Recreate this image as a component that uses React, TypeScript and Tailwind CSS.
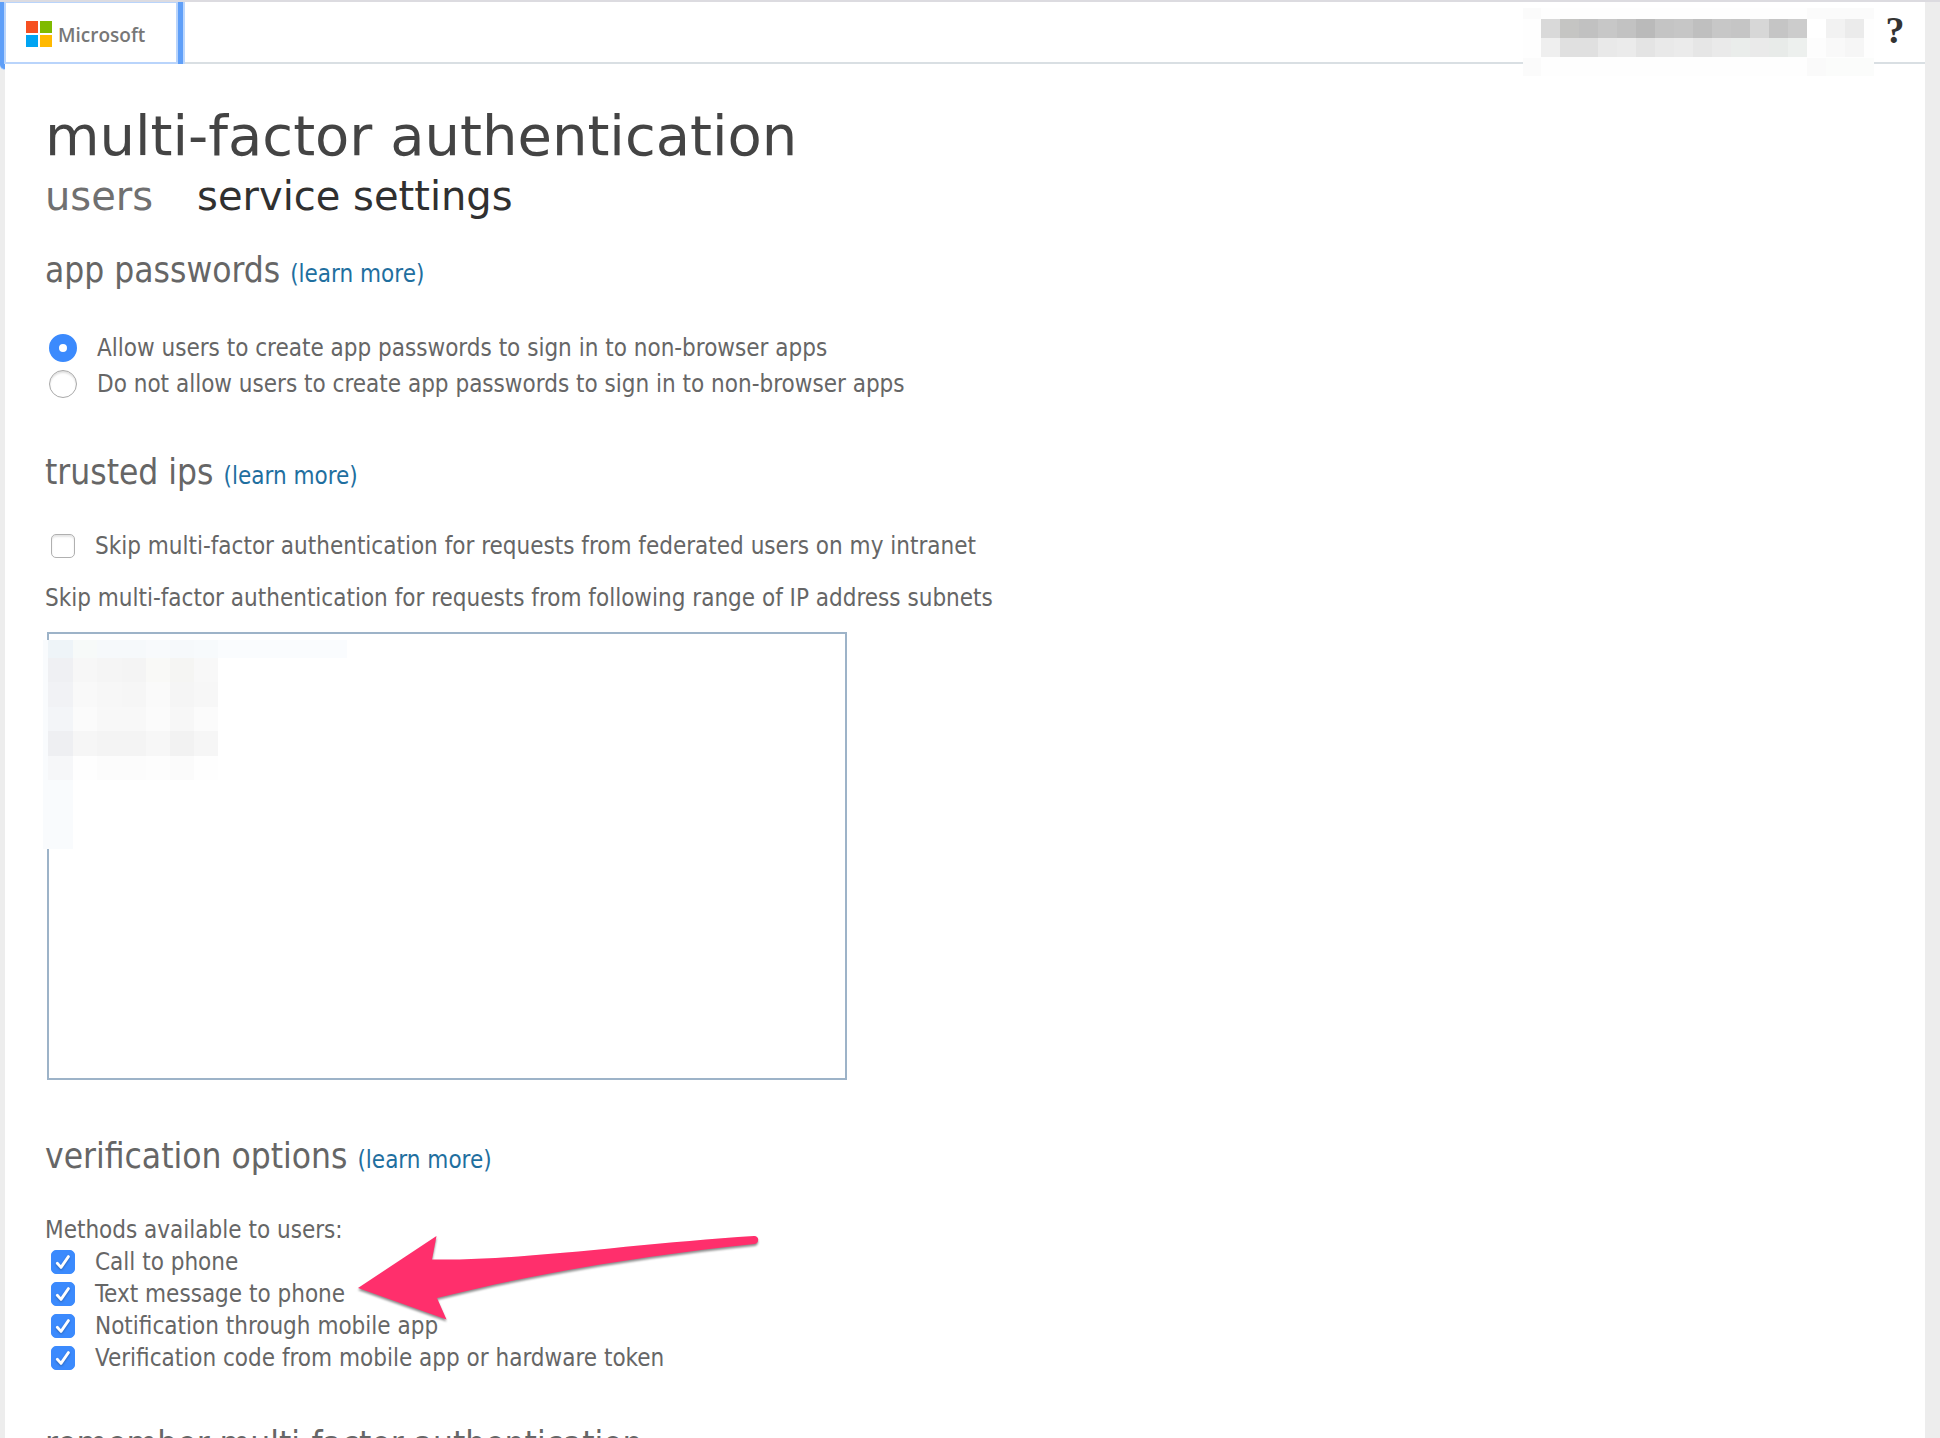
import React, { useId, useState } from 'react';

const BODY_FONT = "font-['DejaVu_Sans_Condensed','DejaVu_Sans',sans-serif]";
const TITLE_FONT = "font-['DejaVu_Sans',sans-serif]";

function MicrosoftMark() {
  return (
    <svg className="size-[26px]" viewBox="0 0 26 26" shapeRendering="crispEdges" aria-hidden="true">
      <rect x="0" y="0" width="12" height="12" fill="#f65022" />
      <rect x="14" y="0" width="12" height="12" fill="#7fba00" />
      <rect x="0" y="14" width="12" height="12" fill="#00a4f2" />
      <rect x="14" y="14" width="12" height="12" fill="#ffb901" />
    </svg>
  );
}

const ACCOUNT_TOP = ['#d9d9d9', '#c5c5c3', '#c1c1c1', '#c7c7c7', '#c2c2c2', '#bababa', '#c4c4c4', '#c6c6c6', '#bfbfbf', '#c7c7c7', '#c5c5c5', '#d7d7d7', '#c5c5c5', '#cccccc', '#ffffff', '#f2f2f2', '#ebebeb'];
const ACCOUNT_BOTTOM = ['#efefef', '#e0e0e0', '#e0e0e0', '#e9e9e9', '#ebebeb', '#e4e4e4', '#e9e9e9', '#ebebeb', '#e6e6e6', '#eaeaea', '#eaedeb', '#eaeaea', '#e8ebe9', '#edf0ee', '#fdfdfd', '#f9f9f9', '#f6f6f6'];

/* Pixelated account name in the header. */
function AccountMosaic() {
  return (
    <svg className="absolute top-[6px] right-[51px] h-[68px] w-[351px]" viewBox="0 0 351 68" shapeRendering="crispEdges" aria-hidden="true">
      <rect width="351" height="68" fill="#fefefe" />
      <rect x="0" y="0" width="18" height="11" fill="#fbfbfb" />
      <rect x="284" y="0" width="67" height="11" fill="#fbfbfb" />
      {ACCOUNT_TOP.map((fill, i) => (
        <rect key={i} x={18 + i * 19} y="11" width="19" height="19" fill={fill} />
      ))}
      {ACCOUNT_BOTTOM.map((fill, i) => (
        <rect key={i} x={18 + i * 19} y="30" width="19" height="19" fill={fill} />
      ))}
      <rect x="0" y="50" width="18" height="18" fill="#fbfbfb" />
      <rect x="284" y="50" width="19" height="18" fill="#fafafa" />
      <rect x="303" y="50" width="48" height="18" fill="#fbfcfb" />
    </svg>
  );
}

const SUBNET_ROWS: { y: number; h: number; cells: string[] }[] = [
  { y: 0, h: 18, cells: ['#eef4f8', '#f7faf9', '#f6f9fb', '#f6f9fb', '#f8fafc', '#f6f9fb', '#f7fafc'] },
  { y: 18, h: 24, cells: ['#eff0f3', '#f7f7f7', '#f5f5f5', '#f4f4f4', '#f9f9f7', '#f5f5f3', '#f8f8f8'] },
  { y: 42, h: 25, cells: ['#f1f2f5', '#f9f9f9', '#f7f7f7', '#f6f6f6', '#fafafa', '#f5f5f5', '#f7f7f7'] },
  { y: 67, h: 24, cells: ['#f3f5f8', '#fbfbfb', '#f8f8f8', '#f8f8f8', '#fbfbfb', '#f7f7f7', '#fbfbfb'] },
  { y: 91, h: 25, cells: ['#eeeff2', '#f6f6f6', '#f4f4f4', '#f4f4f4', '#f7f7f7', '#f2f2f2', '#f6f6f6'] },
  { y: 116, h: 24, cells: ['#f6f7f9', '#fefefe', '#fcfcfc', '#fcfcfc', '#fdfdfd', '#fbfbfb', '#fefefe'] },
];
const SUBNET_X = [5, 30, 54, 79, 103, 127, 151, 175];

/* Pixelated address list over the corner of the text box. */
function SubnetMosaic() {
  return (
    <svg className="pointer-events-none absolute top-2 -left-1 h-[209px] w-[304px]" viewBox="0 0 304 209" shapeRendering="crispEdges" aria-hidden="true">
      <rect width="30" height="209" fill="#f9fbfd" />
      <rect x="175" y="0" width="129" height="18" fill="#fafcfe" />
      {SUBNET_ROWS.map((row) =>
        row.cells.map((fill, i) => (
          <rect key={`${row.y}-${i}`} x={SUBNET_X[i]} y={row.y} width={SUBNET_X[i + 1] - SUBNET_X[i]} height={row.h} fill={fill} />
        )),
      )}
    </svg>
  );
}

function PinkArrow() {
  return (
    <svg className="pointer-events-none absolute -top-4 left-[305px] h-[100px] w-[420px] drop-shadow-[0_2px_1px_rgba(0,0,0,0.45)]" viewBox="350 1230 420 100" aria-hidden="true">
      <path
        d="M358 1288 L436.5 1236 L432 1259.5 C520 1261 640 1243 754 1236 C759.5 1235.8 759.5 1243 754.5 1244 C650 1255 540 1272 437 1298 L446.5 1319.5 Z"
        fill="#ff2f6c"
      />
    </svg>
  );
}

function SectionHeading({ children, learnMore = true }: { children: string; learnMore?: boolean }) {
  return (
    <div className="flex items-baseline gap-2.5">
      <h2 className="text-[35px] leading-[48px] whitespace-nowrap">{children}</h2>
      {learnMore && (
        <a href="#learn-more" className="text-[24px] leading-8 whitespace-nowrap text-[#1f6f9f]">
          (learn more)
        </a>
      )}
    </div>
  );
}

function Radio({ label, checked, onSelect }: { label: string; checked: boolean; onSelect: () => void }) {
  const id = useId();
  return (
    <div className="flex h-9 items-center gap-5 pl-1">
      <input
        id={id}
        type="radio"
        name="app-passwords"
        checked={checked}
        onChange={onSelect}
        className="size-7 shrink-0 appearance-none rounded-full border border-[#a9a9a9] bg-white shadow-[inset_0_2px_2px_rgba(0,0,0,0.12)] checked:border-[10px] checked:border-[#3b8afd] checked:shadow-none"
      />
      <label htmlFor={id} className="leading-9">
        {label}
      </label>
    </div>
  );
}

function Checkbox({ label, defaultChecked = false }: { label: string; defaultChecked?: boolean }) {
  const id = useId();
  return (
    <div className="flex h-8 items-center gap-5 pl-1.5">
      <span className="grid size-6 shrink-0">
        <input
          id={id}
          type="checkbox"
          defaultChecked={defaultChecked}
          className="peer col-start-1 row-start-1 size-6 appearance-none rounded-[5px] border border-[#b0b0b0] bg-white shadow-[inset_0_2px_2px_rgba(0,0,0,0.1)] checked:border-[#3b8afd] checked:bg-[#3b8afd] checked:shadow-none"
        />
        <svg className="pointer-events-none invisible col-start-1 row-start-1 size-6 drop-shadow-[0_1px_1px_rgba(0,0,0,0.3)] peer-checked:visible" viewBox="0 0 24 24" fill="none" stroke="#fff" strokeWidth="2.8" strokeLinecap="round" strokeLinejoin="round" aria-hidden="true">
          <path d="M6.3 13.2 L10 17.4 L17.4 6.6" />
        </svg>
      </span>
      <label htmlFor={id} className="leading-8">
        {label}
      </label>
    </div>
  );
}

export default function App() {
  const [allow, setAllow] = useState(true);
  return (
    <div className={`flex h-screen flex-col overflow-hidden border-t-2 border-[#dcdbe0] bg-[#ededed] pr-[15px] pl-[5px] text-[24px] text-[#666666] ${BODY_FONT}`}>
      <div className="flex grow flex-col bg-white">
        <header className="relative flex h-[62px] shrink-0 items-start justify-between border-b-2 border-[#d9dfe3]">
          <a href="#home" className="relative -ml-[5px] flex h-[62px] border-r-2 border-[#bcd7fd] bg-[#5f9ff8] pr-[5px] pl-1">
            <span className="absolute top-full left-0 h-[6px] w-[5px] rounded-bl-[5px] border-b border-[#bcd7fd] bg-[#5f9ff8]" />
            <span className="relative flex items-center gap-1.5 border-2 border-t border-[#b9d4fb] bg-white pt-0.5 pr-[31px] pl-5">
              <MicrosoftMark />
              <span className="pt-0.5 font-['Open_Sans',sans-serif] text-[19px] leading-[26px] font-semibold text-[#777777]">Microsoft</span>
            </span>
          </a>
          <AccountMosaic />
          <button type="button" aria-label="Help" className="mr-5 h-14 w-5 font-['Liberation_Serif',serif] text-[38px] leading-[54px] font-bold text-[#333333]">
            ?
          </button>
        </header>

        <main className="px-10 pt-10">
          <h1 className={`text-[56px] leading-[64px] text-[#444444] ${TITLE_FONT}`}>multi-factor authentication</h1>
          <nav className={`mt-1 flex gap-11 text-[40px] leading-[48px] ${TITLE_FONT}`}>
            <a href="#users" className="text-[#707070]">users</a>
            <a href="#service-settings" aria-current="page" className="text-[#303030]">service settings</a>
          </nav>

          <section className="mt-[26px]">
            <SectionHeading>app passwords</SectionHeading>
            <div role="radiogroup" aria-label="app passwords" className="mt-9">
              <Radio label="Allow users to create app passwords to sign in to non-browser apps" checked={allow} onSelect={() => setAllow(true)} />
              <Radio label="Do not allow users to create app passwords to sign in to non-browser apps" checked={!allow} onSelect={() => setAllow(false)} />
            </div>
          </section>

          <section className="mt-[46px]">
            <SectionHeading>trusted ips</SectionHeading>
            <div className="mt-[34px]">
              <Checkbox label="Skip multi-factor authentication for requests from federated users on my intranet" />
            </div>
            <label htmlFor="subnets" className="mt-5 block leading-8">
              Skip multi-factor authentication for requests from following range of IP address subnets
            </label>
            <div className="relative mt-[18px] ml-0.5 max-w-[800px]">
              <textarea id="subnets" className="block h-[448px] w-full resize-none border-2 border-[#9db3c8] bg-white" />
              <SubnetMosaic />
            </div>
          </section>

          <section className="mt-[52px]">
            <SectionHeading>verification options</SectionHeading>
            <p className="mt-[34px] leading-8">Methods available to users:</p>
            <div className="relative">
              <Checkbox label="Call to phone" defaultChecked />
              <Checkbox label="Text message to phone" defaultChecked />
              <Checkbox label="Notification through mobile app" defaultChecked />
              <Checkbox label="Verification code from mobile app or hardware token" defaultChecked />
              <PinkArrow />
            </div>
          </section>

          <section className="mt-[46px]">
            <SectionHeading learnMore={false}>remember multi-factor authentication</SectionHeading>
          </section>
        </main>
      </div>
    </div>
  );
}
